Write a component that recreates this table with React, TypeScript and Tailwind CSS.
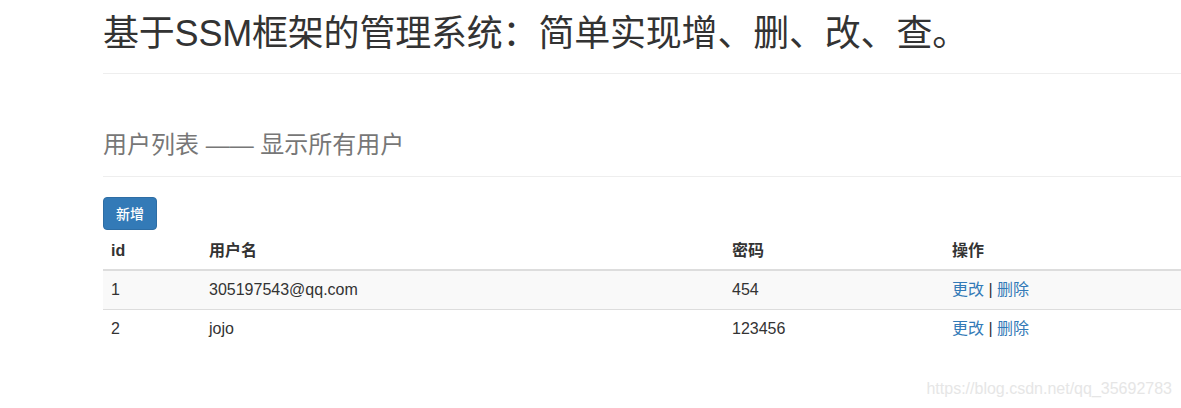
export default function App() {
  const font = { fontFamily: '"Liberation Sans", "Noto Sans CJK SC", sans-serif' };
  const rows = [
    { id: "1", name: "305197543@qq.com", pwd: "454" },
    { id: "2", name: "jojo", pwd: "123456" },
  ];
  return (
    <div
      className="relative w-[1181px] h-[408px] overflow-hidden bg-white text-[#333] font-['Liberation_Sans','Noto_Sans_CJK_SC',sans-serif]"
    >
      <div className="pl-[103px] w-[1243px]">
        <div className="pt-[14px] pb-[9px] border-b border-[#eee]">
          <h1 className="text-[36px] leading-[39.6px] mb-[10px] font-normal text-[#333] tracking-[-0.2px]">
            基于SSM框架的管理系统：简单实现增、删、改、查。
          </h1>
        </div>
        <div className="mt-[58px] pb-[9px] border-b border-[#eee]">
          <h3 className="text-[24px] leading-[26.4px] mb-[9px] font-normal text-[#777]">
            用户列表 —— 显示所有用户
          </h3>
        </div>
        <div className="mt-[20px] flex">
          <button className="h-[33px] px-[12px] rounded-[4px] bg-[#337ab7] border border-[#2e6da4] text-white text-[14px] font-medium leading-none">
            新增
          </button>
        </div>
        <table className="mt-[2px] w-[1140px] border-collapse text-[16px]">
          <thead>
            <tr className="h-[38px] border-b-2 border-[#ddd] text-left">
              <th className="w-[98px] px-[8px] font-bold">id</th>
              <th className="w-[523px] px-[8px] font-bold">用户名</th>
              <th className="w-[220px] px-[8px] font-bold">密码</th>
              <th className="px-[8px] font-bold">操作</th>
            </tr>
          </thead>
          <tbody>
            {rows.map((r, i) => (
              <tr
                key={r.id}
                className={
                  i === 0
                    ? "h-[39px] bg-[#f9f9f9]"
                    : "h-[39px] border-t border-[#ddd]"
                }
              >
                <td className="px-[8px]">{r.id}</td>
                <td className="px-[8px]">{r.name}</td>
                <td className="px-[8px]">{r.pwd}</td>
                <td className="px-[8px]">
                  <a className="text-[#337ab7]">更改</a>
                  <span className="text-[#333]"> | </span>
                  <a className="text-[#337ab7]">删除</a>
                </td>
              </tr>
            ))}
          </tbody>
        </table>
      </div>
      <div
        className="absolute right-[9px] top-[377px] text-[16px] text-[#e6e6e6]"
        style={font}
      >
        https://blog.csdn.net/qq_35692783
      </div>
    </div>
  );
}
